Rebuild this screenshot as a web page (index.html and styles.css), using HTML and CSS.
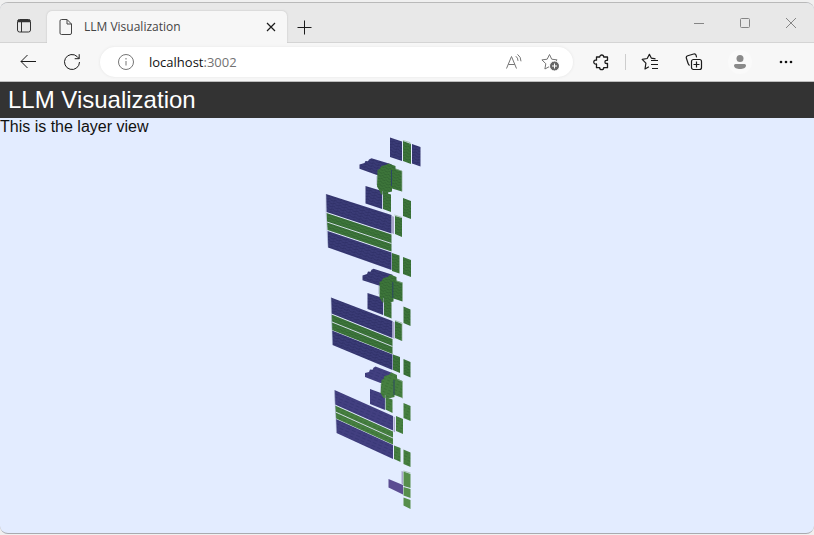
FILE: index.html
```html
<!DOCTYPE html>
<html lang="en">
<head>
<meta charset="utf-8">
<title>LLM Visualization</title>
<link rel="stylesheet" href="styles.css">
</head>
<body>
<div class="window">
  <div class="tabstrip">
    <button class="icon-btn tab-actions" aria-label="Tab actions"><svg width="16" height="16" viewBox="0 0 16 16"><rect x="1.5" y="1.5" width="13" height="12.500" rx="2"/><path d="M2 3h12" stroke-width="2.500"/><path d="M5.500 4v10"/></svg></button>
    <div class="tab">
      <svg class="page-icon" width="14" height="18" viewBox="0 0 14 18"><path d="M2.500 1.500h5.500l4.500 4.500v9a1.500 1.500 0 0 1-1.500 1.500h-8.500a1.500 1.500 0 0 1-1.500-1.500v-12a1.500 1.500 0 0 1 1.500-1.500zM8 1.500v4.500h4.500"/></svg>
      <span class="tab-title">LLM Visualization</span>
      <button class="icon-btn" aria-label="Close tab"><svg width="10" height="10" viewBox="0 0 10 10"><path d="M1 1l8 8M9 1l-8 8" stroke-width="1.200"/></svg></button>
    </div>
    <button class="icon-btn new-tab" aria-label="New tab"><svg width="16" height="16" viewBox="0 0 16 16"><path d="M8.500 1.500v14M1.500 8.500h14"/></svg></button>
    <div class="window-controls">
      <button class="icon-btn" aria-label="Minimize"><svg width="12" height="12" viewBox="0 0 12 12"><path d="M1 6.500h10"/></svg></button>
      <button class="icon-btn" aria-label="Maximize"><svg width="12" height="12" viewBox="0 0 12 12"><rect x="1.500" y="1.500" width="9" height="9" rx="1"/></svg></button>
      <button class="icon-btn" aria-label="Close"><svg width="12" height="12" viewBox="0 0 12 12"><path d="M1 1l10 10M11 1l-10 10"/></svg></button>
    </div>
  </div>
  <div class="toolbar">
    <button class="icon-btn back" aria-label="Back"><svg width="18" height="16" viewBox="0 0 18 16"><path d="M17 7.500h-15M8.500 1l-6.500 6.500 6.500 6.500"/></svg></button>
    <button class="icon-btn reload" aria-label="Refresh"><svg width="18" height="18" viewBox="0 0 18 18"><path d="M16.500 9a7.500 7.500 0 1 1-2.300-5.400l2 2M16.200 1.200v4.500h-4.500"/></svg></button>
    <div class="address">
      <button class="icon-btn muted" aria-label="Site information"><svg width="18" height="18" viewBox="0 0 18 18"><circle cx="9" cy="9" r="7.500"/><path d="M9 8v4.500M9 5v1.500"/></svg></button>
      <a class="url" href="#"><span class="host">localhost</span>:3002</a>
      <button class="icon-btn muted" aria-label="Read aloud"><svg width="18" height="18" viewBox="0 0 18 18"><path d="M1.500 15.500l5-12 5 12M3.300 11.500h6.500M10.800 3.200q2.200 1.600 2.200 4.600M12.500 1.400q3.500 2.400 3.500 6.900"/></svg></button>
      <button class="icon-btn muted" aria-label="Add to favorites"><svg width="18" height="18" viewBox="0 0 18 18"><path d="M8.500 1.500l2.200 4.700 5.400.7-4 3.800 1 5.300-4.600-2.500-4.600 2.500.9-5.300-3.900-3.800 5.300-.7z"/><circle class="badge" cx="13.500" cy="13" r="5"/><path class="plus" d="M13.500 10.500v5M11 13h5"/></svg></button>
    </div>
    <div class="tools">
      <button class="icon-btn" aria-label="Extensions"><svg width="18" height="18" viewBox="0 0 18 18"><path stroke-width="1.300" stroke-linejoin="round" d="M4.500 4h3.200a2 2 0 1 1 4 0h3.800v3.300h-1a1.600 1.600 0 0 0 0 3.200h1v4.200h-3.800a2 2 0 0 1-4 0h-3.200v-3.800a2 2 0 1 1 0-3.700z"/></svg></button>
      <span class="separator"></span>
      <button class="icon-btn" aria-label="Favorites"><svg width="18" height="18" viewBox="0 0 18 18"><path stroke-width="1.200" stroke-linejoin="round" d="M14.500 5.900l-4.100-.7-2-3.900-2.200 4.200-5 .8 3.700 3.800-.9 5.900 3.900-2.200M10 7.500h7M10 11.500h7M11 15.500h6"/></svg></button>
      <button class="icon-btn" aria-label="Collections"><svg width="18" height="18" viewBox="0 0 18 18"><rect x="6.500" y="6.500" width="10" height="10" rx="2" stroke-width="1.200"/><path stroke-width="1.200" d="M11.500 8.500v6M8.500 11.500h6M4.600 12.500a3 3 0 0 1-1.400-1.800l-1.800-5.500a2 2 0 0 1 1.300-2.500l6-1.700a2 2 0 0 1 2.400 1.300l.5 2"/></svg></button>
      <button class="icon-btn profile" aria-label="Profile"><svg width="24" height="24" viewBox="0 0 24 24"><circle cx="12" cy="12" r="12" class="disc"/><circle cx="12" cy="8.500" r="3.500" class="person"/><path class="person" d="M7.500 14h9a1.500 1.500 0 0 1 1.500 1.500c0 2.500-3 3.500-6 3.500s-6-1-6-3.500a1.500 1.500 0 0 1 1.500-1.500z"/></svg></button>
      <button class="icon-btn" aria-label="Settings and more"><svg width="18" height="18" viewBox="0 0 18 18"><g class="dots"><circle cx="4" cy="9" r="1.300"/><circle cx="9" cy="9" r="1.300"/><circle cx="14" cy="9" r="1.300"/></g></svg></button>
    </div>
  </div>
  <header class="page-header"><h1>LLM Visualization</h1></header>
  <main class="page">
    <p>This is the layer view</p>
    <svg class="model" viewBox="0 136 814 396" role="img" aria-label="Layers of the model">
      <defs>
        <pattern id="blue" width="6" height="3" patternUnits="userSpaceOnUse" patternTransform="rotate(19)"><path fill="#3a3b76" d="M0 0h6v3h-6z"/><path fill="#31326a" d="M0 0h4v1h-4zM3 2h3v1h-3z"/></pattern>
        <pattern id="green" width="5" height="3" patternUnits="userSpaceOnUse" patternTransform="rotate(19)"><path fill="#3d753a" d="M0 0h5v3h-5z"/><path fill="#336733" d="M0 0h3v1h-3zM3 2h2v1h-2z"/></pattern>
        <pattern id="blue-low" width="6" height="3" patternUnits="userSpaceOnUse" patternTransform="rotate(23)"><path fill="#423f80" d="M0 0h6v3h-6z"/><path fill="#383876" d="M0 0h4v1h-4z"/></pattern>
        <pattern id="green-low" width="5" height="3" patternUnits="userSpaceOnUse" patternTransform="rotate(23)"><path fill="#467f40" d="M0 0h5v3h-5z"/><path fill="#3b7238" d="M0 0h3v1h-3z"/></pattern>
      </defs>
      <g class="blue">
        <path d="M390 137.500l12 4v19.500l-12-4zM412 144l8.500 3v19.500l-8.500-3z"/>
        <path d="M359.500 164.500l5-1.500 1-2 2.500.3 1-1.800 2.500-1.300 20 6v12l-14-1-18-6.500z"/>
        <path d="M365.500 186l16.500 5v18l-16.500-5.500z"/>
        <path d="M326 194l65.500 21v18.500l-65-21.500zM327.500 231l64 21.500v17.500l-63.500-22.500z"/>
        <path d="M362.500 275.500l4.500-1.500 1-2.500 2.500.3 1-2 2-1 19 6v12l-13-1-17-5.500z"/>
        <path d="M367.500 293l15.500 5v17l-15.500-6z"/>
        <path d="M331 297.500l61.500 23.500v17l-61-24.500zM332 330.500l60.500 24v15.500l-60-25z"/>
      </g>
      <g class="blue-low">
        <path d="M365 373l4-1 1-2.500 2.500.3 1-2 2-1.300 17 6.500v11l-12-1-15.500-6z"/>
        <path d="M370 389l15 5.500v15.500l-15-6z"/>
        <path d="M334.500 390l58.500 26v14.500l-58-26zM336 419l57 26v14l-56.500-26z"/>
      </g>
      <g class="green">
        <path d="M403 141l8 3v20l-8-3z"/>
        <path d="M377.500 170l2-1 2-3 4-1 3-1.500 7 2.500v2.500l6.500 2.500v20.500l-10-3v3l-4 1v2h-7l-1-3-3-5z"/>
        <path d="M383 192l8 2.500v17.500l-8-3zM403 198l8 3v18l-8-3z"/>
        <path d="M326.500 213l65 21.500v17l-64-21.500z"/>
        <path d="M395 216l7 2v19l-7-3zM392 253l7.500 2.500v18l-7.500-2.500zM403 257l8 3v17l-8-3z"/>
        <path d="M379.500 282l2-1 2-3 4-1 3-2.500 6 2.500v3.500l6 2v19l-9-3v3l-4 1h-7l-3-5z"/>
        <path d="M384 300l7.500 2.500v16l-7.500-3zM403.500 306.500l7 3v16.500l-7-3z"/>
        <path d="M331.500 314.500l61 24.500v15l-60.500-24z"/>
        <path d="M395 321l7 3v17l-7-3zM393 354.500l7 2.500v16l-7-3zM403.500 359l7 3v15.500l-7-3z"/>
      </g>
      <g class="green-low">
        <path d="M381.500 380l2-1 1-3 4-1 3-2.500 5.500 2.500v3.500l5.500 2.500v17l-8-3v2l-4 1h-7l-3-5z"/>
        <path d="M385.500 397l7 2.500v13.500l-7-3.500zM403.500 403l7 3v15l-7-3z"/>
        <path d="M335 405.500l58 26v13l-57-26z"/>
        <path d="M396 416l7 3v15l-7-3zM394 445.500l6.500 2.500v14l-6.500-3zM403.500 449.500l7 3v14.500l-7-3z"/>
      </g>
      <path class="light-green" d="M403.500 471.500l7 2.500v14l-7-2zM403.500 487l7 2v9l-7-2.500zM403.500 497.500l7 2.500v9l-7-3.500z"/>
      <path class="purple" d="M388.500 479l14.500 6v9.500l-14.500-7z"/>
      <path class="sliver" d="M392 216l2 .7v17.300l-2-.7zM392.500 321.500l2 .7v16.500l-2-.7zM393.500 416.500l1.500.7v15l-1.500-.7zM401.500 471l1.500.5v13l-1.500-1z"/>
      <path class="gap" d="M327 222l64.500 21.500M332 322l60.500 24.500M335.500 412l57.500 26"/>
      <path class="gap thin" d="M326 194v17.500l2 36M331 297.500l1.500 47.500M334.500 390l2 43M376.500 176v9M378.500 286v8M380.500 384v8M382.500 191v18M383.500 298v17M385.300 395v15"/>
      <path class="shade" d="M391.500 170v16M392.800 282v16M394 380v15"/>
      <path class="fringe" d="M403 140.500l7 2v2M395.500 169l6.500 2v20.500M394.500 215l7.500 2.500M396.500 281l6 2v18M395 320.500l7 2.500v18M397.500 379.500l5 2v17M403.500 471l7 2"/>
    </svg>
  </main>
</div>
</body>
</html>
```
FILE: styles.css
```css
* { box-sizing: border-box; }

body {
  margin: 0;
  padding: 2px 0 1px;
  min-height: 100vh;
  display: flex;
  background: #f0f0f0;
  font-family: "Liberation Sans", Arial, sans-serif;
}

.window {
  flex: 1;
  min-width: 0;
  display: flex;
  flex-direction: column;
  border-top: 1px solid #b9b9b9;
  border-bottom: 1px solid #a9abb0;
  border-radius: 8px;
  overflow: hidden;
  background: #e3ecff;
}

svg { display: block; fill: none; stroke: currentColor; }

.icon-btn {
  display: flex;
  align-items: center;
  justify-content: center;
  flex: none;
  padding: 0;
  border: 0;
  background: none;
  color: #1b1b1b;
}

.tabstrip {
  display: flex;
  align-items: flex-end;
  height: 40px;
  background: #e8e8e8;
  border-bottom: 1px solid #d4d4d4;
}

.tab-actions { width: 47px; height: 32px; color: #333; }

.tab {
  display: flex;
  align-items: center;
  width: 240px;
  height: 32px;
  margin-bottom: -1px;
  padding: 0 11px 0 12px;
  border-radius: 5px 5px 0 0;
  background: #f7f7f7;
  box-shadow: 0 0 2px #bbb;
  clip-path: inset(-3px -3px 0 -3px);
  color: #444;
}

.tab-title {
  flex: 1;
  margin-left: 11px;
  font: 12px/16px "Segoe UI", "Open Sans", sans-serif;
}

.new-tab { width: 34px; height: 31px; }

.window-controls {
  display: flex;
  align-self: stretch;
  margin-left: auto;
}

.window-controls .icon-btn { width: 46px; color: #858585; }

.toolbar {
  display: flex;
  align-items: center;
  height: 39px;
  background: #f7f7f7;
  border-bottom: 1px solid #bdbdbd;
}

.back { width: 44px; margin-left: 6px; }
.reload { width: 44px; }

.address {
  flex: 1;
  display: flex;
  align-items: center;
  gap: 18px;
  height: 30px;
  margin: 0 14px 0 6px;
  padding: 0 14px 0 17px;
  border-radius: 15px;
  background: #fff;
  box-shadow: 0 0 3px #e4e4e4;
}

.address .url {
  flex: 1;
  margin-left: -4px;
  font: 13px/18px "Segoe UI", "Open Sans", sans-serif;
  color: #727272;
  text-decoration: none;
}

.address .host { color: #111; }
.muted { color: #757575; }
.badge { fill: #666; stroke: #fff; }
.plus { stroke: #fff; }

.tools {
  display: flex;
  align-items: center;
  gap: 16px;
  padding-right: 14px;
}

.tools .icon-btn { width: 28px; }
.tools .profile { margin: 0 2px; }
.separator { width: 1px; height: 16px; margin: 0 -6px; background: #cdcdcd; }
.disc { fill: #fafafa; stroke: none; }
.person { fill: #8a8a8a; stroke: none; }
.dots { fill: #111; stroke: none; }

.page-header {
  padding: 0 8px;
  background: #333;
  color: #fff;
}

.page-header h1 { margin: 0; font-size: 24px; font-weight: 400; line-height: 36px; }

.page { flex: 1; color: #111; }
.page p { margin: 0; font-size: 16px; line-height: 18px; }

.model { width: 100%; stroke: none; }
.blue { fill: url(#blue); }
.blue-low { fill: url(#blue-low); }
.green { fill: url(#green); }
.green-low { fill: url(#green-low); }
.light-green { fill: #568e4b; }
.purple { fill: #5b4c92; }
.sliver { fill: #a9a5cc; }
.gap { stroke: #cfdbe4; }
.thin { stroke: #a9b2cf; stroke-width: 0.5; }
.shade { stroke: #2c4764; }
.fringe { stroke: #8fb096; stroke-width: 0.7; }
```
